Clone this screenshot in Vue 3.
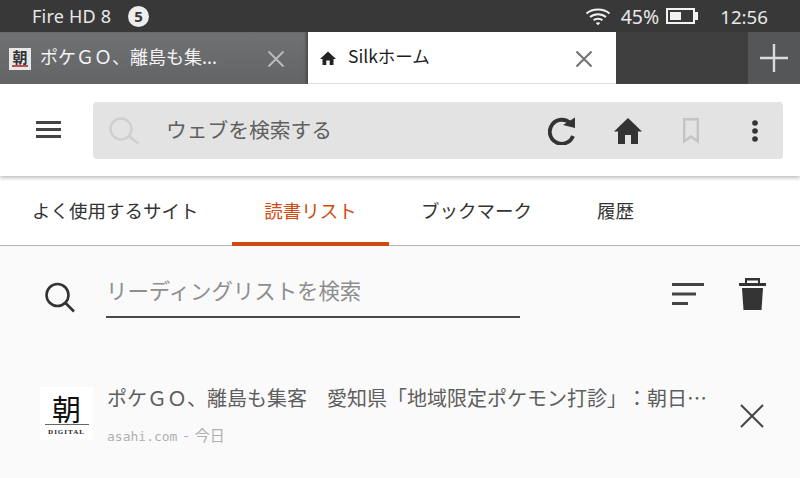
<script setup>
const navTabs = [
  { label: 'よく使用するサイト', active: false },
  { label: '読書リスト', active: true },
  { label: 'ブックマーク', active: false },
  { label: '履歴', active: false },
]
</script>

<template>
  <div class="screen">
    <div class="status">
      <span class="device">Fire HD 8</span>
      <span class="badge">5</span>
      <span class="grow"></span>
      <svg class="wifi" width="26" height="20" viewBox="0 0 26 20" fill="none" stroke="#f2f2f2" stroke-width="2">
        <path d="M1.5 7.5C7.5 2.2 18.5 2.2 24.5 7.5" />
        <path d="M5 11C9.5 7.2 16.5 7.2 21 11" />
        <path d="M8.6 14.2C11 12.3 15 12.3 17.4 14.2" />
        <path d="M10.8 17L13 19.2L15.2 17C14 16 12 16 10.8 17Z" fill="#f2f2f2" stroke="none" />
      </svg>
      <span class="pct">45%</span>
      <span class="battery"><span class="level"></span></span>
      <span class="clock">12:56</span>
    </div>

    <div class="tabstrip">
      <div class="tab inactive">
        <span class="favicon">
          <span class="fav-kanji">朝</span>
          <span class="fav-line"></span>
        </span>
        <span class="tab-title">ポケＧＯ、離島も集...</span>
        <svg class="tab-x" width="18" height="18" viewBox="0 0 18 18" stroke="#b9babb" stroke-width="2">
          <path d="M1.5 1.5L16.5 16.5M16.5 1.5L1.5 16.5" />
        </svg>
      </div>
      <div class="tab current">
        <svg class="tab-home" width="16" height="16" viewBox="0 0 16 16" fill="#222">
          <path d="M8 1.5L0 9H2.5V15H6.3V10.5H9.7V15H13.5V9H16Z" />
        </svg>
        <span class="tab-title dark">Silkホーム</span>
        <svg class="tab-x" width="18" height="18" viewBox="0 0 18 18" stroke="#707070" stroke-width="2">
          <path d="M1.5 1.5L16.5 16.5M16.5 1.5L1.5 16.5" />
        </svg>
      </div>
      <span class="grow"></span>
      <div class="newtab">
        <svg width="28" height="28" viewBox="0 0 28 28" stroke="#dcdcdc" stroke-width="2.4">
          <path d="M14 0V28M0 14H28" />
        </svg>
      </div>
    </div>

    <div class="toolbar">
      <svg class="menu" width="25" height="17" viewBox="0 0 25 17" fill="#444">
        <rect y="0" width="25" height="3" />
        <rect y="7" width="25" height="3" />
        <rect y="14" width="25" height="3" />
      </svg>
      <div class="urlbar">
        <svg class="url-search" width="32" height="28" viewBox="0 0 32 28" fill="none" stroke="#cfcfcf" stroke-width="2.4">
          <circle cx="13" cy="12" r="10.5" />
          <path d="M21 19.5L30.5 26.5" />
        </svg>
        <span class="url-text">ウェブを検索する</span>
        <span class="grow"></span>
        <svg class="reload" width="28" height="29" viewBox="0 0 28 29" fill="none">
          <path d="M22.5 7.5A12 12 0 1 0 25 20" stroke="#333" stroke-width="3.8" />
          <path d="M15 9L27 1.5V12Z" fill="#333" />
        </svg>
        <svg class="home" width="28" height="26" viewBox="0 0 28 26" fill="#333">
          <path d="M14 0L0 13.5H4V26H11V17H17V26H24V13.5H28Z" />
        </svg>
        <svg class="mark" width="16" height="26" viewBox="0 0 16 26" fill="none" stroke="#c4c4c4" stroke-width="2.4">
          <path d="M1.2 1.2H14.8V23.5L8 18.5L1.2 23.5Z" />
        </svg>
        <svg class="dots" width="6" height="22" viewBox="0 0 6 22" fill="#333">
          <circle cx="3" cy="3" r="2.8" />
          <circle cx="3" cy="11" r="2.8" />
          <circle cx="3" cy="19" r="2.8" />
        </svg>
      </div>
    </div>

    <div class="navtabs">
      <div v-for="t in navTabs" :key="t.label" class="navtab" :class="{ active: t.active }">{{ t.label }}</div>
    </div>

    <div class="content">
      <div class="filter">
        <svg class="filter-search" width="32" height="32" viewBox="0 0 32 32" fill="none" stroke="#333" stroke-width="2.6">
          <circle cx="13.5" cy="13" r="11" />
          <path d="M21.5 21L30 29.5" />
        </svg>
        <div class="field">リーディングリストを検索</div>
        <span class="grow"></span>
        <svg class="sort" width="32" height="24" viewBox="0 0 32 24" fill="#444">
          <rect y="1" width="32" height="3" />
          <rect y="10.5" width="24" height="3" />
          <rect y="20" width="16" height="3" />
        </svg>
        <svg class="trash" width="27" height="33" viewBox="0 0 27 33" fill="#333">
          <path d="M0 5H27V8H0Z" />
          <path d="M6 5V0H21V5H19V2.5H8V5Z" />
          <path d="M3 10H24L22.5 32H4.5Z" />
        </svg>
      </div>

      <div class="item">
        <div class="thumb">
          <span class="thumb-kanji">朝</span>
          <span class="thumb-rule"></span>
          <span class="thumb-label">DIGITAL</span>
        </div>
        <div class="item-body">
          <div class="item-title">ポケＧＯ、離島も集客　愛知県「地域限定ポケモン打診」：朝日…</div>
          <div class="item-meta"><span class="mono">asahi.com</span><span class="sep">-</span>今日</div>
        </div>
        <svg class="item-x" width="24" height="24" viewBox="0 0 24 24" stroke="#444" stroke-width="2">
          <path d="M1 1L23 23M23 1L1 23" />
        </svg>
      </div>
    </div>
  </div>
</template>

<style>
html, body { margin: 0; padding: 0; background: #fafafa; }
</style>

<style scoped>
.screen {
  width: 800px;
  height: 478px;
  overflow: hidden;
  display: flex;
  flex-direction: column;
  font-family: "Noto Sans CJK JP", "Noto Sans", sans-serif;
  text-spacing-trim: space-all;
  background: #fafafa;
}
.grow { flex: 1; }

.status {
  height: 32px;
  background: #383838;
  color: #e8e8e8;
  display: flex;
  align-items: center;
  padding-left: 32px;
  font-size: 18px;
  flex: none;
}
.device { font-family: "Noto Sans", sans-serif; letter-spacing: 0.2px; }
.badge {
  width: 21px;
  height: 21px;
  border-radius: 50%;
  background: #eee;
  color: #383838;
  font: 700 15px/21px "Noto Sans", sans-serif;
  text-align: center;
  margin-left: 17px;
}
.wifi { margin-right: 10px; }
.pct { font-family: "Noto Sans", sans-serif; font-size: 19.5px; }
.battery {
  width: 29px;
  height: 16px;
  border: 2px solid #f2f2f2;
  margin-left: 7px;
  padding: 2px;
  box-sizing: border-box;
  position: relative;
  display: flex;
}
.battery::after {
  content: "";
  position: absolute;
  right: -5px;
  top: 2px;
  width: 3px;
  height: 8px;
  background: #f2f2f2;
}
.level { width: 11px; background: #f2f2f2; height: 8px; }
.clock {
  font-family: "Noto Sans", sans-serif;
  font-size: 18.7px;
  margin-left: 25px;
  margin-right: 32px;
}

.tabstrip {
  height: 52px;
  flex: none;
  background: #3f3f3f;
  display: flex;
}
.tab {
  width: 308px;
  display: flex;
  align-items: center;
  box-sizing: border-box;
  position: relative;
}
.inactive {
  background: linear-gradient(#707173, #636466);
  padding-left: 9px;
  box-shadow: inset -3px 0 3px -1px #48494a;
}
.current {
  background: #fff;
  padding-left: 12px;
  border-bottom: 1px solid #e4e4e4;
}
.favicon {
  width: 22px;
  height: 22px;
  background: #e8e8e8;
  display: flex;
  flex-direction: column;
  align-items: center;
  margin-right: 9px;
  margin-top: 2px;
  flex: none;
}
.fav-kanji { font-size: 15px; line-height: 15px; color: #333; font-weight: 700; margin-top: 1px; }
.fav-line { width: 16px; height: 2px; background: #c0504d; margin-top: 1px; }
.tab-title {
  font-size: 18px;
  color: #f4f4f4;
  white-space: nowrap;
  margin-top: -4px;
}
.tab-title.dark { color: #1c1c1c; font-size: 17.5px; margin-left: 12px; }
.tab-x { position: absolute; right: 23px; top: 18px; }
.tab-home { margin-top: 1px; margin-left: 0; }
.newtab {
  width: 52px;
  background: #555657;
  display: flex;
  align-items: center;
  justify-content: center;
}

.toolbar {
  height: 92px;
  flex: none;
  background: #fff;
  display: flex;
  align-items: center;
  box-sizing: border-box;
  padding: 0 17px 0 36px;
  box-shadow: 0 2px 3px #c4c4c4;
  position: relative;
  z-index: 1;
}
.menu { margin-right: 32px; margin-top: -1px; }
.urlbar {
  flex: 1;
  height: 57px;
  background: #e3e3e3;
  border-radius: 4px;
  display: flex;
  align-items: center;
  padding: 0 25px 0 15px;
}
.url-search { margin-top: 2px; }
.url-text {
  margin-left: 26px;
  font-size: 20.75px;
  color: #5f5f5f;
  margin-top: -3px;
}
.reload { margin-right: 38px; margin-top: 1px; }
.home { margin-right: 41px; margin-top: 1px; }
.mark { margin-right: 53px; margin-top: 1px; }
.dots { margin-top: 1px; }

.navtabs {
  height: 65px;
  flex: none;
  margin-top: 5px;
  background: #fff;
  border-bottom: 1px solid #b4b4b4;
  box-sizing: border-box;
  display: flex;
  padding-left: 16px;
}
.navtab {
  font-size: 18.5px;
  color: #333;
  padding: 16px 16px 0;
  line-height: 26px;
  box-sizing: border-box;
  white-space: nowrap;
}
.navtab:nth-child(1) { width: 200px; }
.navtab:nth-child(2) {
  width: 157px;
  text-align: center;
  padding: 16px 0 0;
  margin-left: 16px;
}
.navtab:nth-child(3) { margin-left: 16px; }
.navtab:nth-child(4) { margin-left: 33px; }
.navtab.active {
  color: #d14a10;
  border-bottom: 4px solid #cf4a0e;
  height: 65px;
}

.content { flex: 1; background: #fafafa; }
.filter {
  display: flex;
  align-items: flex-start;
  height: 86px;
  padding: 0 34px 0 44px;
}
.filter-search { margin-top: 36px; flex: none; }
.field {
  width: 414px;
  margin-left: 30px;
  height: 52px;
  margin-top: 20px;
  box-sizing: border-box;
  border-bottom: 2px solid #4a4a4a;
  font-size: 21.4px;
  line-height: 30px;
  padding-top: 9px;
  color: #8e8e8e;
  white-space: nowrap;
}
.sort { margin-right: 35px; margin-top: 36px; }
.trash { margin-top: 32px; }

.item {
  display: flex;
  align-items: flex-start;
  padding: 55px 36px 0 40px;
}
.thumb {
  width: 53px;
  height: 53px;
  background: #fff;
  display: flex;
  flex-direction: column;
  align-items: center;
  flex: none;
}
.thumb-kanji {
  font-size: 29px;
  line-height: 29px;
  color: #111;
  margin-top: 7px;
}
.thumb-rule {
  width: 44px;
  height: 1px;
  background: #666;
  margin-top: 1px;
}
.thumb-label {
  font: 700 7px/9px "Liberation Serif", serif;
  letter-spacing: 1px;
  color: #222;
  margin-top: 3px;
}
.item-body { margin-left: 14px; flex: 1; min-width: 0; }
.item-title {
  font-size: 20px;
  line-height: 26px;
  color: #5e5e5e;
  white-space: nowrap;
  margin-top: -2px;
}
.item-meta {
  font-size: 15px;
  line-height: 20px;
  color: #b0b0b0;
  margin-top: 14px;
}
.mono { font-family: "DejaVu Sans Mono", monospace; font-size: 13px; }
.sep { margin: 0 6px; }
.item-x { margin-top: 17px; flex: none; }
</style>
